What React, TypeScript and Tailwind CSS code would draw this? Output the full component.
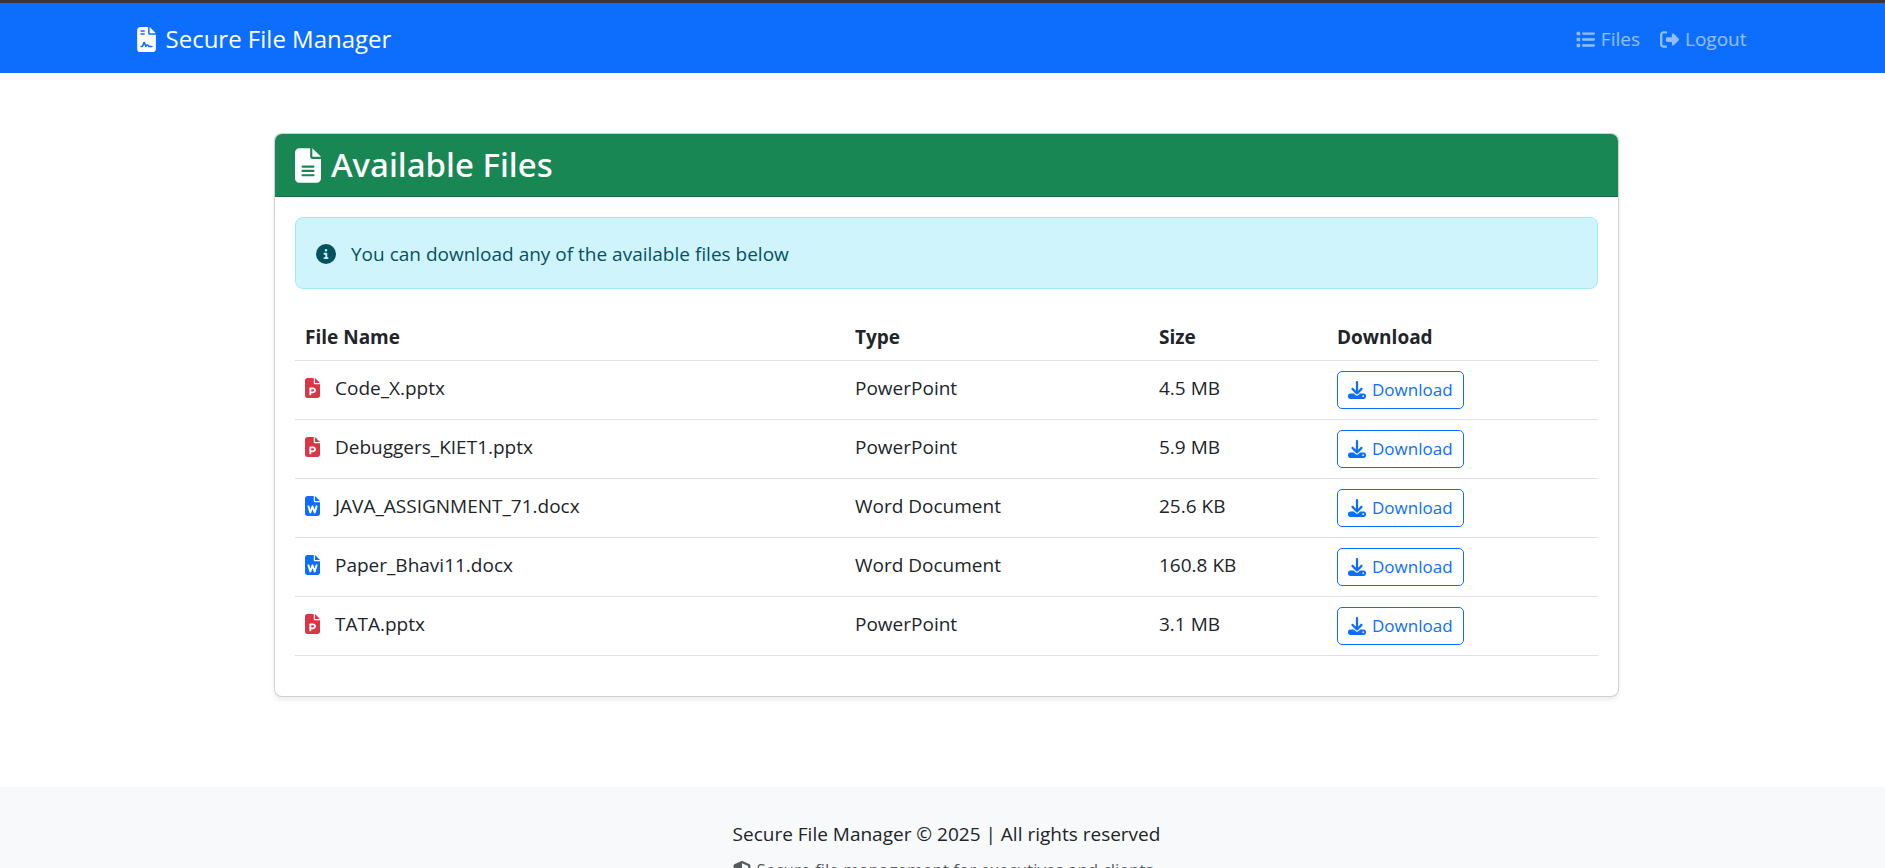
import { FaFileContract, FaList, FaRightFromBracket, FaFileLines, FaCircleInfo, FaFilePowerpoint, FaFileWord, FaDownload, FaShieldHalved } from 'react-icons/fa6';

type FileKind = 'PowerPoint' | 'Word Document';

const files: { name: string; kind: FileKind; size: string }[] = [
  { name: 'Code_X.pptx', kind: 'PowerPoint', size: '4.5 MB' },
  { name: 'Debuggers_KIET1.pptx', kind: 'PowerPoint', size: '5.9 MB' },
  { name: 'JAVA_ASSIGNMENT_71.docx', kind: 'Word Document', size: '25.6 KB' },
  { name: 'Paper_Bhavi11.docx', kind: 'Word Document', size: '160.8 KB' },
  { name: 'TATA.pptx', kind: 'PowerPoint', size: '3.1 MB' },
];

function NavBar() {
  return (
    <nav className="border-t-[3px] border-[#373737] bg-[#0d6efd] pl-2">
      <div className="mx-auto flex h-[70px] max-w-[1650px] items-center justify-between pt-[2px] pr-[25px] pl-[15px]">
        <a href="#" className="flex items-center gap-[10px] text-[24px] leading-9 text-white">
          <FaFileContract className="h-[25px] w-[19px]" />
          Secure File Manager
        </a>
        <div className="flex gap-5 text-[19px] leading-[30px] text-white/55">
          <a href="#" className="flex items-center gap-[6px]">
            <FaList className="size-[19px]" />
            Files
          </a>
          <a href="#" className="flex items-center gap-[6px]">
            <FaRightFromBracket className="size-[19px]" />
            Logout
          </a>
        </div>
      </div>
    </nav>
  );
}

function FileTable() {
  return (
    <table className="w-full table-fixed border-collapse text-left">
      <thead>
        <tr className="h-[46px] border-b border-[#dee2e6] font-bold">
          <th className="w-[550px] px-[10px]">File Name</th>
          <th className="w-[304px] px-[10px]">Type</th>
          <th className="w-[178px] px-[10px]">Size</th>
          <th className="px-[10px]">Download</th>
        </tr>
      </thead>
      <tbody>
        {files.map((file) => (
          <tr key={file.name} className="border-b border-[#dee2e6] align-top leading-[34px]">
            <td className="p-[10px]">
              <span className="flex items-center gap-[15px]">
                {file.kind === 'PowerPoint' ? (
                  <FaFilePowerpoint className="h-5 w-[15px] text-[#dc3545]" />
                ) : (
                  <FaFileWord className="h-5 w-[15px] text-[#0d6efd]" />
                )}
                {file.name}
              </span>
            </td>
            <td className="p-[10px]">{file.kind}</td>
            <td className="p-[10px]">{file.size}</td>
            <td className="p-[10px]">
              <button className="flex h-[38px] items-center gap-[6px] rounded-[5px] border border-[#0d6efd] px-[10px] text-[17px] text-[#0d6efd]">
                <FaDownload className="size-[18px]" />
                Download
              </button>
            </td>
          </tr>
        ))}
      </tbody>
    </table>
  );
}

export default function App() {
  return (
    <div className="flex h-screen flex-col overflow-hidden bg-white font-['Open_Sans','Noto_Sans',sans-serif] text-[19px] leading-[30px] text-[#212529]">
      <NavBar />
      <main className="pt-[60px] pl-2">
        <section className="mx-auto w-full max-w-[1345px] overflow-hidden rounded-lg border border-black/18 bg-white shadow-[0_3px_5px_rgba(0,0,0,0.075)]">
          <header className="border-b border-[#146c43] bg-[#198754] px-5 py-[10px]">
            <h1 className="flex h-[42px] items-center gap-[10px] font-['Noto_Sans','Open_Sans',sans-serif] text-[33px] font-medium leading-[42px] text-white">
              <FaFileLines className="h-[35px] w-[26px]" />
              Available Files
            </h1>
          </header>
          <div className="px-5 pt-5 pb-10">
            <div role="status" className="mb-[25px] flex items-center gap-[15px] rounded-lg border border-[#9eeaf9] bg-[#cff4fc] px-5 pt-[21px] pb-[19px] text-[#055160]">
              <FaCircleInfo className="size-5" />
              You can download any of the available files below
            </div>
            <FileTable />
          </div>
        </section>
      </main>
      <footer className="mt-[90px] flex grow justify-center bg-[#f8f9fa] pt-8 pl-2">
        <div>
          <p>Secure File Manager © 2025 | All rights reserved</p>
          <p className="mt-[6px] flex items-center gap-[6px] text-[17px] text-[#212529]/75">
            <FaShieldHalved className="size-[18px]" />
            Secure file management for executives and clients
          </p>
        </div>
      </footer>
    </div>
  );
}
